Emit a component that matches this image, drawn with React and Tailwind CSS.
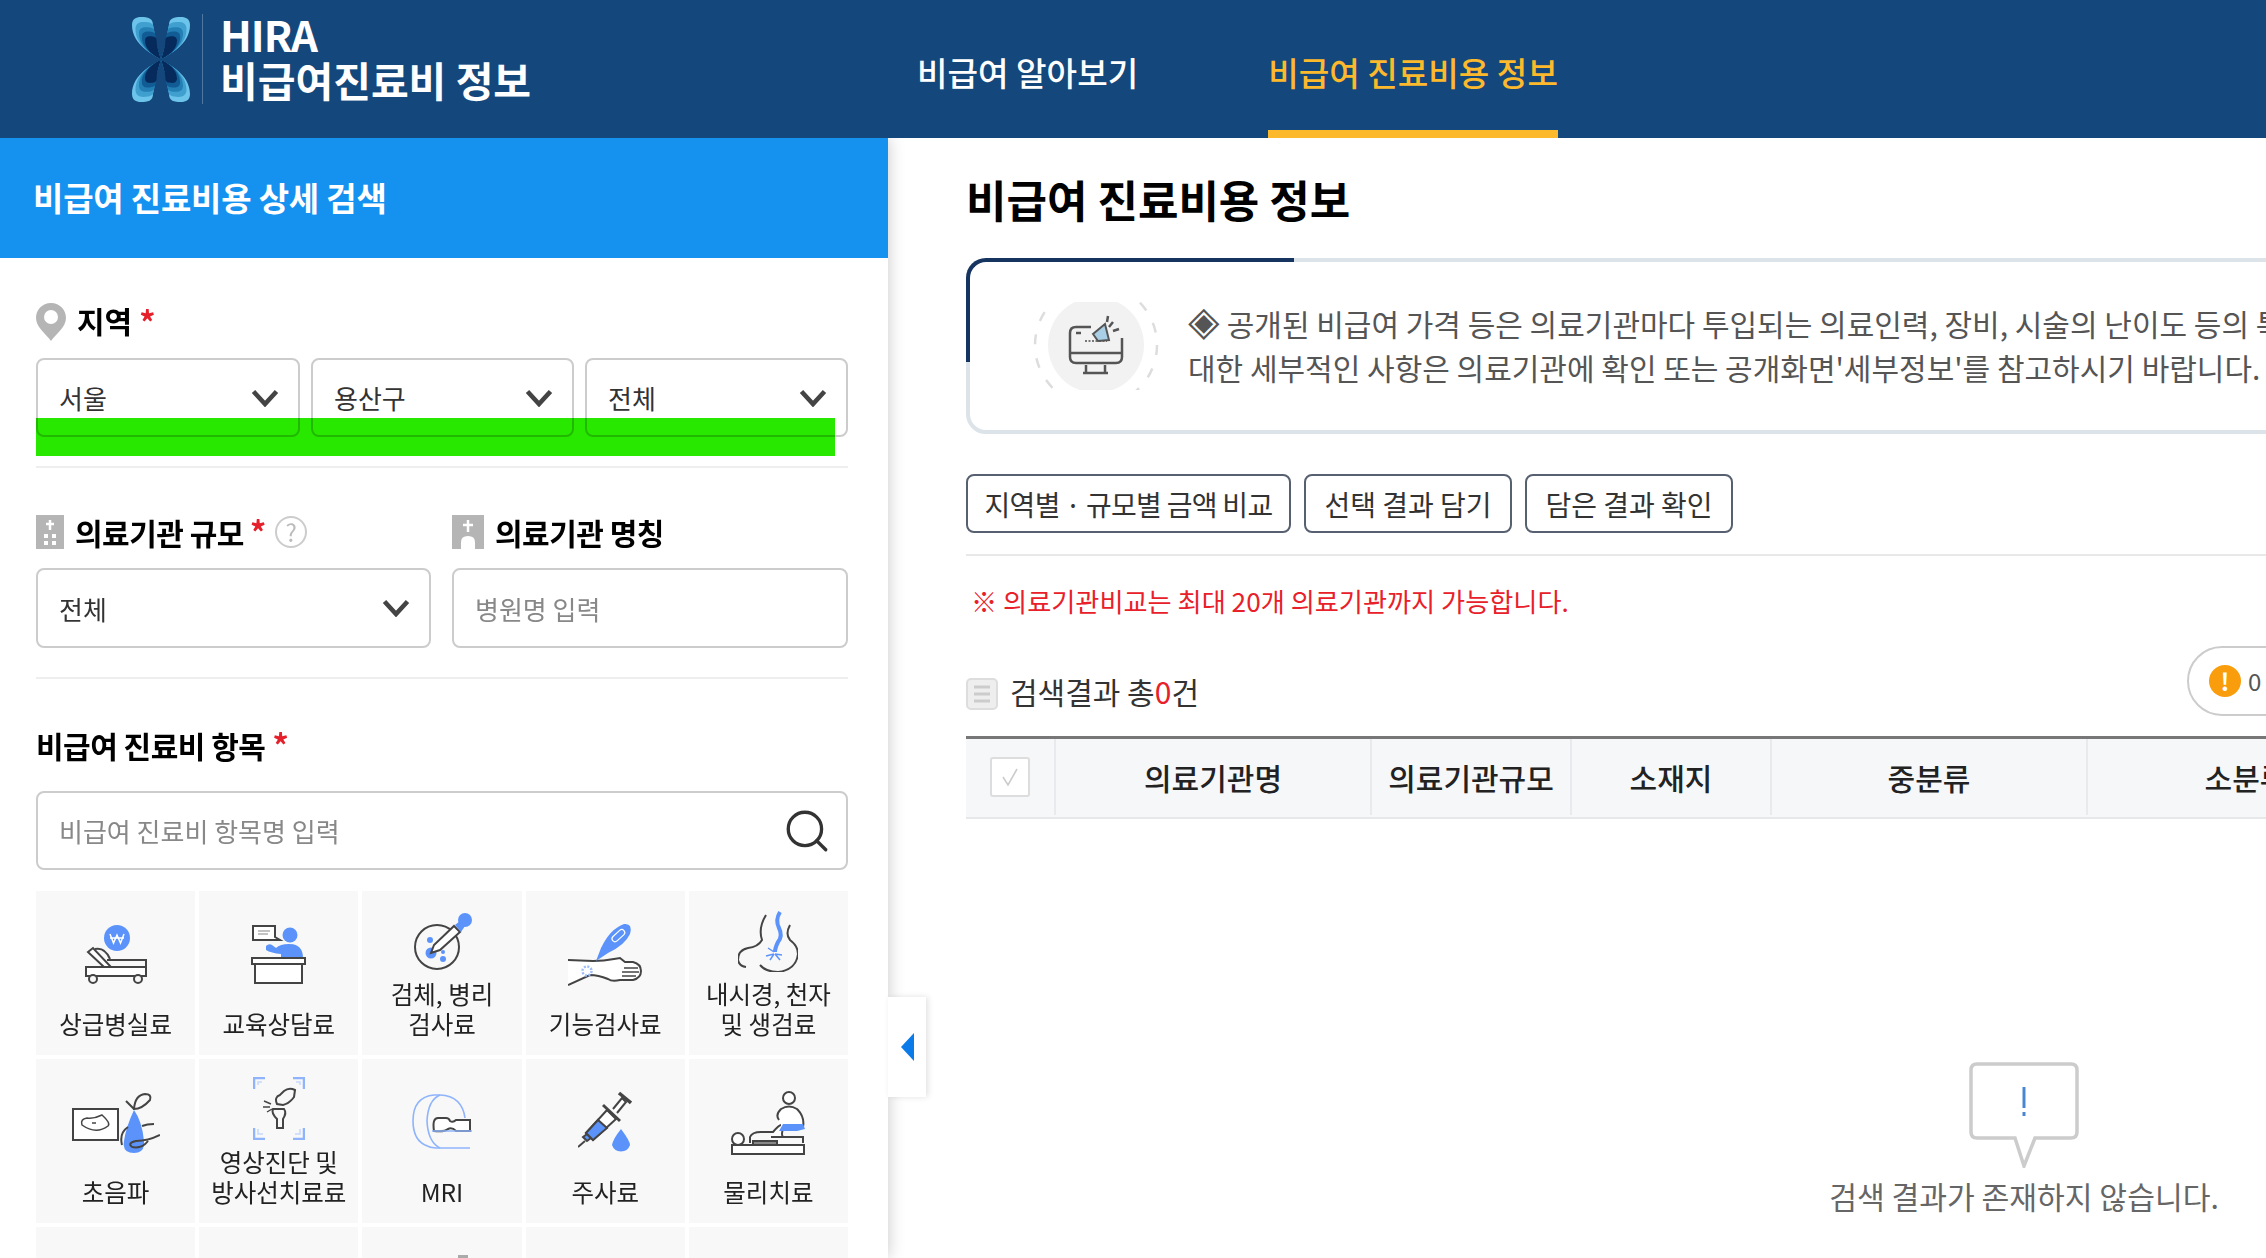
import { Search } from "lucide-react";

const BLUE = "#5b93fb";
const INK = "#444";

function Chevron() {
  return (
    <svg width="28" height="18" viewBox="0 0 28 18" fill="none">
      <path d="M2.5 2.5 L14 15 L25.5 2.5" stroke="#444" strokeWidth="4.6" />
    </svg>
  );
}

function Star() {
  return <span className="text-[#e5202a] text-[32px] font-bold leading-none">*</span>;
}

function Logo() {
  const colors = ["#6cc4ea", "#3f9fcf", "#2480b4", "#115c95", "#062a5c"];
  const scales = [1, 0.88, 0.76, 0.66, 0.55];
  const lobe = "M28.5 42 C22 38 0 28 0 8 C0 2 4 0 9 0 C16 0 21 1 21 8 C21 20 26 32 28.5 42 Z";
  return (
    <svg width="58" height="85" viewBox="0 0 58 85">
      {colors.map((c, i) => (
        <g key={c} transform={`translate(29 42.5) scale(${scales[i]}) translate(-29 -42.5)`}>
          <path d={lobe} fill={c} />
          <path d={lobe} fill={c} transform="translate(58 0) scale(-1 1)" />
          <path d={lobe} fill={c} transform="translate(0 85) scale(1 -1)" />
          <path d={lobe} fill={c} transform="translate(58 85) scale(-1 -1)" />
        </g>
      ))}
    </svg>
  );
}

function BedIcon() {
  return (
    <svg width="62" height="59" viewBox="0 0 62 59" fill="none" stroke={INK} strokeWidth="2">
      <circle cx="32" cy="13" r="13" fill={BLUE} stroke="none" />
      <path d="M25 9 L28.5 18 L32 10 L35.5 18 L39 9 M25 13 H39" stroke="#fff" strokeWidth="1.5" />
      <path d="M22 35 H61 V42" />
      <rect x="1" y="42" width="60" height="9" fill="#fff" />
      <path d="M3 27 L8 23 L26 42 H19 Z" fill="#fff" />
      <path d="M10 24 Q20 22 25 34" />
      <circle cx="8" cy="54" r="4" fill="#f8f8f8" />
      <circle cx="53" cy="54" r="4" fill="#f8f8f8" />
    </svg>
  );
}

function CounselIcon() {
  return (
    <svg width="55" height="59" viewBox="0 0 55 59" fill="none" stroke={INK} strokeWidth="2">
      <path d="M2 1 H24 V12 L29 15 H2 Z" fill="#fff" />
      <path d="M7 6 H19 M7 9 H17" strokeWidth="1.2" stroke="#888" />
      <circle cx="39" cy="10" r="7.5" fill={BLUE} stroke="none" />
      <path d="M15 21 Q18 18 21 20 L25 23 Q29 19 38 19 Q52 19 52 33 H30 V29 Q20 28 15 25 Z" fill={BLUE} stroke="none" />
      <rect x="1" y="33" width="53" height="6" fill="#fff" />
      <rect x="4" y="39" width="47" height="19" fill="#fff" />
    </svg>
  );
}

function DishIcon() {
  return (
    <svg width="60" height="58" viewBox="0 0 60 58" fill="none" stroke={INK} strokeWidth="2">
      <circle cx="23" cy="35" r="22" />
      <circle cx="17" cy="41" r="5.5" fill={BLUE} stroke="none" />
      <circle cx="16" cy="28" r="3" fill={BLUE} stroke="none" />
      <circle cx="29" cy="47" r="3" fill={BLUE} stroke="none" />
      <circle cx="29" cy="40" r="2" fill={BLUE} stroke="none" />
      <path d="M17 41 L20 33 L40 14 L46 20 L26 38 Z" fill="#fff" />
      <circle cx="51" cy="8" r="7" fill={BLUE} stroke="none" />
      <path d="M41 13 L46 9 L51 14 L47 20 Z" fill={BLUE} stroke="none" />
    </svg>
  );
}

function ThermometerIcon() {
  return (
    <svg width="74" height="64" viewBox="0 0 74 64" fill="none" stroke={INK} strokeWidth="2">
      <path d="M0 37 L25 38 Q36 38 46 36 L52 35 L57 39 H65 Q73 41 73 48 Q73 55 65 57 H52 Q44 59 40 56 Q30 52 22 52 L0 62" fill="#fff" />
      <path d="M56 45 H70 M54 49 H71 M54 53 H68" strokeWidth="1.5" />
      <path d="M28 38 L33 25 Q42 6 56 1 Q65 0 62 11 Q57 22 40 30 Z" fill={BLUE} stroke="none" />
      <rect x="43" y="10" width="15" height="6" rx="3" transform="rotate(-42 50 13)" stroke="#fff" strokeWidth="1.2" />
      <circle cx="19" cy="48" r="4.5" stroke="#9dbdfb" strokeWidth="2.5" strokeDasharray="2 1.5" />
    </svg>
  );
}

function StomachIcon() {
  return (
    <svg width="60" height="62" viewBox="0 0 60 62" fill="none" stroke={INK} strokeWidth="2">
      <path d="M28 5 Q20 18 24 30 Q20 37 10 38 Q0 40 0 50 Q1 56 8 57" />
      <path d="M52 15 Q47 24 52 30 Q60 36 60 44 Q58 60 40 62 Q28 62 22 55" />
      <path d="M42 2 Q37 10 41 18 Q45 26 40 32 Q37 38 37 42" stroke={BLUE} strokeWidth="4" />
      <path d="M36 42 L30 38 M36 44 L28 46 M36 44 L32 50 M37 44 L42 50 M37 44 L44 45" stroke={BLUE} strokeWidth="1.5" />
    </svg>
  );
}

function UltrasoundIcon() {
  return (
    <svg width="88" height="60" viewBox="0 0 88 60" fill="none" stroke={INK} strokeWidth="2">
      <rect x="1" y="16" width="45" height="31" fill="#fff" />
      <path d="M10 32 Q8 26 15 25 Q22 26 30 22 Q39 30 36 33 Q24 42 10 32 Z" strokeWidth="1.5" />
      <path d="M20 30 H24" strokeWidth="1.5" />
      <path d="M62 16 L54 8 M62 16 Q70 16 78 7 Q80 1 73 1 Q63 2 62 16 Z" />
      <path d="M62 17 Q70 28 72 48 Q73 60 62 60 Q50 60 52 48 Q54 34 62 17 Z" fill={BLUE} stroke="none" />
      <path d="M70 33 Q75 31 82 31 M50 52 Q47 40 56 34 M60 54 Q55 50 64 48 Q76 48 88 42 M60 54 Q70 56 76 48" />
    </svg>
  );
}

function BoneIcon() {
  return (
    <svg width="52" height="63" viewBox="0 0 52 63" fill="none" stroke={INK} strokeWidth="2">
      <path d="M1 12 V1 H12 M40 1 H51 V12 M1 51 V62 H12 M40 62 H51 V51" stroke="#8fb4fb" strokeWidth="2.5" />
      <path d="M5 8 V5 H9 M43 5 H47 V8 M5 52 V57 H10 M42 57 H47 V52" stroke="#c5d8fd" strokeWidth="1.5" />
      <path d="M24 27 Q21 20 27 18 L31 14 Q36 10 42 13 L41 20 Q36 27 30 28 Z" />
      <path d="M20 32 H31 Q34 36 30 42 V51 H24 V42 Q18 36 20 32 Z" />
      <path d="M11 24 L18 27 M10 30 L17 30 M14 35 L19 32" strokeWidth="1.4" />
    </svg>
  );
}

function MriIcon() {
  return (
    <svg width="60" height="55" viewBox="0 0 60 55" fill="none">
      <path d="M28 1 H22 Q1 3 1 27 Q1 52 24 54 H58" stroke="#8fb4fb" strokeWidth="1.6" />
      <path d="M28 1 Q16 6 15 27 Q16 48 28 54" stroke="#8fb4fb" strokeWidth="1.6" />
      <path d="M28 1 Q50 2 53 24" stroke="#8fb4fb" strokeWidth="1.6" />
      <path d="M22 37 Q20 24 26 24 H34 Q37 24 38 27 Q41 29 44 26 H58 V37 H44 Q40 33 36 35 Q33 38 22 37 Z" fill="#fff" stroke={INK} strokeWidth="2" />
      <path d="M20 37 H60" stroke="#8fb4fb" strokeWidth="1.6" />
    </svg>
  );
}

function SyringeIcon() {
  return (
    <svg width="54" height="64" viewBox="0 0 54 64" fill="none" stroke={INK} strokeWidth="2">
      <path d="M0 56 L7 50" />
      <path d="M5 46 L9 43 L13 47 L9 50 Z" fill={BLUE} />
      <path d="M8 42 L29 19 L38 28 L15 49 Z" fill="#fff" />
      <path d="M8 42 L20 29 L29 37 L15 49 Z" fill={BLUE} />
      <path d="M25 14 L42 30" strokeWidth="3" />
      <path d="M35 18 L44 7 L48 11 L39 22" fill="#fff" />
      <path d="M41 2 L53 12" strokeWidth="3.5" />
      <path d="M43 38 Q52 50 52 54 A9.5 9.5 0 0 1 34 54 Q35 48 43 38 Z" fill={BLUE} stroke="none" />
    </svg>
  );
}

function TherapyIcon() {
  return (
    <svg width="74" height="64" viewBox="0 0 74 64" fill="none" stroke={INK} strokeWidth="2">
      <circle cx="58" cy="7" r="6" fill="#fff" />
      <path d="M48 29 Q44 24 50 18 Q58 13 66 18 Q74 26 72 36 L66 38 H52 Q50 44 52 46 H40" fill="#fff" />
      <path d="M52 33 H72 L74 38 L66 40 H48 Z" fill={BLUE} stroke="none" />
      <circle cx="7" cy="48" r="6" fill="#fff" />
      <path d="M19 52 V46 Q21 41 30 41 H42 Q48 34 50 34 M42 46 H72 V52" />
      <path d="M22 53 V50 H46 V53" fill="#888" />
      <rect x="1" y="54" width="72" height="9" fill="#fff" />
    </svg>
  );
}

const items = [
  { label: ["상급병실료"], icon: <BedIcon />, gap: "mb-[25px]" },
  { label: ["교육상담료"], icon: <CounselIcon />, gap: "mb-[25px]" },
  { label: ["검체, 병리", "검사료"], icon: <DishIcon />, gap: "mb-[9px] ml-[4px]" },
  { label: ["기능검사료"], icon: <ThermometerIcon />, gap: "mb-[22px]" },
  { label: ["내시경, 천자", "및 생검료"], icon: <StomachIcon />, gap: "mb-[7px]" },
  { label: ["초음파"], icon: <UltrasoundIcon />, gap: "mb-[24px]" },
  { label: ["영상진단 및", "방사선치료료"], icon: <BoneIcon />, gap: "mb-[7px]" },
  { label: ["MRI"], icon: <MriIcon />, gap: "mb-[28px]" },
  { label: ["주사료"], icon: <SyringeIcon />, gap: "mb-[22px]" },
  { label: ["물리치료"], icon: <TherapyIcon />, gap: "mb-[22px]" },
];

function Tile({ item }) {
  return (
    <div className="h-[164px] bg-[#f8f8f8] flex flex-col items-center justify-end pb-[16px]">
      <div className={item.gap + " flex justify-center"}>{item.icon}</div>
      {item.label.map((l) => (
        <div key={l} className="text-[24.5px] leading-[30px] text-[#222] whitespace-nowrap">
          {l}
        </div>
      ))}
    </div>
  );
}

function Select({ label, className }) {
  return (
    <div className={"border-2 border-[#ccc] rounded-[8px] bg-white flex items-center justify-between pl-[21px] pr-[19px] " + className}>
      <span className="text-[26px] text-[#333]">{label}</span>
      <Chevron />
    </div>
  );
}

export default function App() {
  return (
    <div className="w-[2266px] h-[1258px] overflow-hidden bg-white font-['Noto_Sans_CJK_KR','Noto_Sans',sans-serif]">
      {/* Top bar */}
      <header className="relative z-20 h-[138px] bg-[#14487c] flex pl-[132px]">
        <div className="w-[785px] shrink-0 flex items-center">
          <div className="mb-[20px]">
            <Logo />
          </div>
          <div className="ml-[12px] w-[1px] h-[90px] bg-[#4f77a0] mb-[20px]" />
          <div className="ml-[17px] text-white font-bold mb-[20px]">
            <div className="text-[42px] leading-[42px] tracking-[-1px] -mt-[6px] mb-[3px]">HIRA</div>
            <div className="text-[41px] leading-[42px]">비급여진료비 정보</div>
          </div>
        </div>
        <nav className="flex gap-[130px] text-[33.2px] font-medium">
          <a className="h-[138px] pt-[14px] flex items-center text-white border-b-[8px] border-transparent">비급여 알아보기</a>
          <a className="h-[138px] pt-[14px] flex items-center text-[#fdb92c] border-b-[8px] border-[#fdb92c]">비급여 진료비용 정보</a>
        </nav>
      </header>

      <div className="flex">
        {/* Search panel */}
        <aside className="relative z-10 w-[888px] shrink-0 bg-white shadow-[0_0_16px_rgba(0,0,0,0.22)] h-[1120px]">
          <div className="h-[120px] bg-[#1591ef] flex items-center pl-[33px] text-white text-[33px] font-bold tracking-[-0.2px]">
            비급여 진료비용 상세 검색
          </div>
          <div className="px-[36px] pr-[40px]">
            <div className="mt-[45px] h-[38px] flex items-center">
              <svg width="30" height="38" viewBox="0 0 30 38">
                <path d="M15 0 C6 0 0 7 0 15 C0 24 10 31 15 38 C20 31 30 24 30 15 C30 7 24 0 15 0 Z" fill="#b5b5b5" />
                <circle cx="15" cy="14" r="7" fill="#fff" />
              </svg>
              <span className="ml-[11px] mb-[3px] text-[30px] font-bold text-black">지역</span>
              <span className="ml-[7px]"><Star /></span>
            </div>
            <div className="relative mt-[17px] flex gap-[11px]">
              <Select label="서울" className="w-[264px] h-[79px]" />
              <Select label="용산구" className="w-[263px] h-[79px]" />
              <Select label="전체" className="w-[263px] h-[79px]" />
              <div className="absolute left-0 top-[60px] w-[799px] h-[38px] bg-[#28e800] mix-blend-multiply" />
            </div>
            <div className="mt-[29px] h-[2px] bg-[#eee]" />

            <div className="mt-[47px] flex gap-[21px]">
              <div className="w-[395px] h-[34px] flex items-center">
                <svg width="28" height="34" viewBox="0 0 28 34">
                  <rect width="28" height="34" fill="#b5b5b5" />
                  <path d="M14 5 V15 M10 9 H18" stroke="#fff" strokeWidth="2.5" />
                  <rect x="8" y="19" width="4" height="4" fill="#fff" />
                  <rect x="16" y="19" width="4" height="4" fill="#fff" />
                  <rect x="8" y="26" width="4" height="4" fill="#fff" />
                  <rect x="16" y="26" width="4" height="4" fill="#fff" />
                </svg>
                <span className="ml-[11px] text-[30px] font-bold text-black tracking-[-0.5px]">의료기관 규모</span>
                <span className="ml-[6px]"><Star /></span>
                <span className="ml-[9px] w-[32px] h-[32px] rounded-full border-2 border-[#ccc] flex items-center justify-center text-[24px] text-[#bbb]">?</span>
              </div>
              <div className="h-[34px] flex items-center">
                <svg width="32" height="34" viewBox="0 0 32 34">
                  <rect width="32" height="34" fill="#b5b5b5" />
                  <path d="M16 5 V17 M11 10 H21" stroke="#fff" strokeWidth="2.5" />
                  <path d="M9 34 V27 Q9 21 16 21 Q23 21 23 27 V34 Z" fill="#fff" />
                </svg>
                <span className="ml-[11px] text-[30px] font-bold text-black tracking-[-0.5px]">의료기관 명칭</span>
              </div>
            </div>
            <div className="mt-[19px] flex gap-[21px]">
              <Select label="전체" className="w-[395px] h-[80px]" />
              <input
                placeholder="병원명 입력"
                className="w-[396px] h-[80px] border-2 border-[#ccc] rounded-[8px] pl-[21px] text-[26px] placeholder:text-[#888] outline-none"
              />
            </div>
            <div className="mt-[29px] h-[2px] bg-[#eee]" />

            <div className="mt-[49px] h-[34px] flex items-center">
              <span className="text-[30px] font-bold text-black tracking-[-0.5px]">비급여 진료비 항목</span>
              <span className="ml-[7px]"><Star /></span>
            </div>
            <div className="mt-[29px] h-[79px] border-2 border-[#ccc] rounded-[8px] flex items-center justify-between pl-[21px] pr-[14px]">
              <input placeholder="비급여 진료비 항목명 입력" className="w-[600px] text-[26px] placeholder:text-[#888] outline-none" />
              <Search size={50} strokeWidth={1.6} color="#333" />
            </div>
            <div className="mt-[21px] grid grid-cols-5 gap-[4px]">
              {items.map((item) => (
                <Tile key={item.label[0]} item={item} />
              ))}
              <div className="h-[164px] bg-[#f8f8f8]" />
              <div className="h-[164px] bg-[#f8f8f8]" />
              <div className="h-[164px] bg-[#f8f8f8] pt-[28px] pl-[96px]">
                <div className="w-[10px] h-[3px] bg-[#aaa]" />
              </div>
              <div className="h-[164px] bg-[#f8f8f8]" />
              <div className="h-[164px] bg-[#f8f8f8]" />
            </div>
          </div>
          {/* collapse tab */}
          <div className="absolute left-full top-[859px] w-[38px] h-[100px] bg-white shadow-[2px_0_6px_rgba(0,0,0,0.12)] flex items-center pl-[13px]">
            <div className="w-0 h-0 border-y-[14px] border-y-transparent border-r-[13px] border-r-[#0a7be8]" />
          </div>
        </aside>

        {/* Results */}
        <main className="flex-1 min-w-0 overflow-hidden pl-[78px]">
          <div className="w-[2116px]">
            <h1 className="mt-[34px] h-[54px] flex items-center text-[44px] font-bold text-black">비급여 진료비용 정보</h1>

            <div className="relative mt-[32px] h-[176px] border-4 border-[#dce4ea] rounded-[20px] flex items-start pl-[63px] pt-[40px]">
              <div className="absolute -left-[4px] -top-[4px] w-[328px] h-[104px] border-t-4 border-l-4 border-[#15345f] rounded-tl-[20px]" />
              <svg width="126" height="88" viewBox="0 0 126 88" fill="none" className="shrink-0">
                <circle cx="63" cy="43" r="61" stroke="#ddd" strokeWidth="2.5" strokeDasharray="10 14" />
                <circle cx="63" cy="43" r="48" fill="#f2f2f2" />
                <path d="M58 25 H43 Q37 25 37 31 V55 Q37 61 43 61 H83 Q89 61 89 55 V36" stroke="#555" strokeWidth="2.5" />
                <path d="M37 51 H89 M53 63 V71 H72 V63 M50 71 H75" stroke="#555" strokeWidth="2.5" />
                <path d="M52 39 H74" stroke="#777" strokeWidth="2" strokeDasharray="2 1.5" />
                <path d="M43 31 H48" stroke="#555" strokeWidth="2.5" />
                <path d="M60 32 L72 22 L76 38 L65 39 Z" fill="#a8cfe6" stroke="#555" strokeWidth="2" />
                <path d="M76 25 L80 20 M74 20 L75 14 M80 29 L86 27" stroke="#555" strokeWidth="2.5" />
              </svg>
              <p className="ml-[29px] -mt-[1px] text-[30px] leading-[44px] text-[#555] whitespace-nowrap">
                <span className="text-[41px] leading-[30px] align-[1px]">◈</span> 공개된 비급여 가격 등은 의료기관마다 투입되는 의료인력, 장비, 시술의 난이도 등의 특성이 다르므로 의료기관별로 차이가 있을 수 있으며, 이에
                <br />
                대한 세부적인 사항은 의료기관에 확인 또는 공개화면'세부정보'를 참고하시기 바랍니다.
              </p>
            </div>

            <div className="mt-[40px] flex gap-[13px]">
              <button className="w-[325px] h-[59px] border-2 border-[#566070] rounded-[8px] text-[28px] text-[#333] tracking-[-0.7px]">지역별 · 규모별 금액 비교</button>
              <button className="w-[208px] h-[59px] border-2 border-[#566070] rounded-[8px] text-[28px] text-[#333]">선택 결과 담기</button>
              <button className="w-[208px] h-[59px] border-2 border-[#566070] rounded-[8px] text-[28px] text-[#333]">담은 결과 확인</button>
            </div>
            <div className="mt-[21px] h-[2px] bg-[#e8e8e8]" />

            <p className="mt-[29px] h-[34px] flex items-center pl-[5px] text-[26.2px] text-[#e8202a]">※ 의료기관비교는 최대 20개 의료기관까지 가능합니다.</p>

            <div className="mt-[27px] w-[1421px] h-[70px] flex justify-between">
              <div className="mt-[32px] h-[32px] flex items-center">
                <svg width="32" height="32" viewBox="0 0 32 32">
                  <rect x="1" y="1" width="30" height="30" rx="4" fill="#eee" stroke="#ddd" strokeWidth="2" />
                  <path d="M8 9 H24 M8 16 H24 M8 23 H24" stroke="#ccc" strokeWidth="3" />
                </svg>
                <span className="ml-[12px] mb-[5px] text-[30px] text-[#333]">
                  검색결과 총<span className="text-[#e8202a]">0</span>건
                </span>
              </div>
              <div className="w-[200px] h-[70px] border-2 border-[#ccc] rounded-full flex items-center pl-[20px]">
                <span className="w-[32px] h-[32px] rounded-full bg-[#f99d0c] text-white font-bold text-[24px] flex items-center justify-center">!</span>
                <span className="ml-[7px] text-[24px] text-[#555]">0</span>
              </div>
            </div>

            <div className="mt-[20px] h-[83px] pb-[2px] border-t-[3px] border-t-[#777] border-b-[2px] border-b-[#e6e8ea] bg-[#f6f7f9] flex text-[30px] font-medium text-[#222]">
              <div className="w-[90px] border-r-2 border-[#e8eaed] flex items-center justify-center">
                <span className="w-[40px] h-[40px] bg-white border-2 border-[#ddd] rounded-[3px] flex items-center justify-center">
                  <svg width="22" height="22" viewBox="0 0 22 22" fill="none">
                    <path d="M4 11 L9 19 L18 3" stroke="#ccc" strokeWidth="1.6" />
                  </svg>
                </span>
              </div>
              <div className="w-[316px] border-r-2 border-[#e8eaed] flex items-center justify-center">의료기관명</div>
              <div className="w-[200px] border-r-2 border-[#e8eaed] flex items-center justify-center">의료기관규모</div>
              <div className="w-[200px] border-r-2 border-[#e8eaed] flex items-center justify-center">소재지</div>
              <div className="w-[316px] border-r-2 border-[#e8eaed] flex items-center justify-center">중분류</div>
              <div className="w-[316px] flex items-center justify-center">소분류</div>
            </div>

            <div className="mt-[243px] flex flex-col items-center">
              <svg width="110" height="106" viewBox="0 0 110 106" fill="none">
                <path d="M8 2 H102 Q108 2 108 8 V70 Q108 76 102 76 H66 L55 104 L46 76 H8 Q2 76 2 70 V8 Q2 2 8 2 Z" fill="#fff" stroke="#ccc" strokeWidth="3.5" />
                <path d="M55 25 V46" stroke="#4a86d0" strokeWidth="3" />
                <path d="M55 50 V54" stroke="#4a86d0" strokeWidth="3" />
              </svg>
              <p className="mt-[8px] text-[30.2px] leading-[40px] text-[#666]">검색 결과가 존재하지 않습니다.</p>
            </div>
          </div>
        </main>
      </div>
    </div>
  );
}
